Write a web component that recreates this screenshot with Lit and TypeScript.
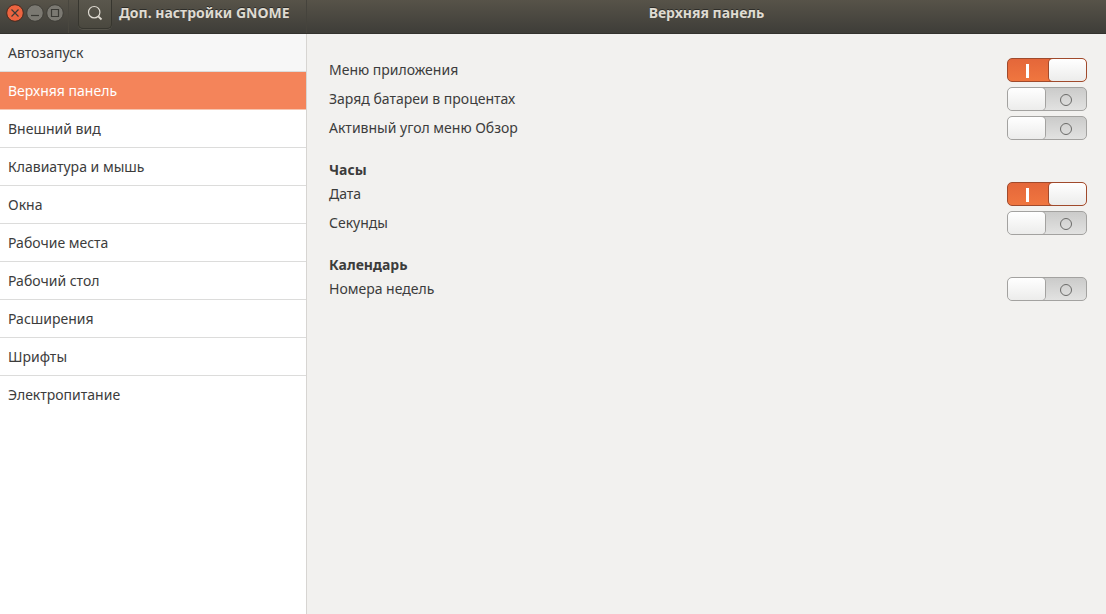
import { LitElement, html, css, svg } from "lit";
import { customElement, property, state } from "lit/decorators.js";

@customElement("toggle-row")
class ToggleRow extends LitElement {
  @property() label = "";
  @property({ type: Boolean }) on = false;

  static styles = css`
    :host { display: block; }
    .row {
      display: flex;
      align-items: center;
      justify-content: space-between;
      height: 24px;
    }
    .switch {
      appearance: none;
      box-sizing: border-box;
      display: grid;
      grid-template-columns: 37px 41px;
      width: 80px;
      height: 24px;
      margin: 0;
      border: 1px solid #a3a2a0;
      border-radius: 5px;
      background: linear-gradient(#cbcbca, #e2e2e1);
      overflow: hidden;
    }
    .switch::before {
      content: "";
      grid-row: 1;
      grid-column: 1;
      height: 22px;
      border-radius: 4px;
      background: linear-gradient(#ffffff, #ececeb);
      box-shadow: 0 0 0 1px #a3a2a0;
    }
    .switch::after {
      content: "";
      grid-row: 1;
      grid-column: 2;
      place-self: center;
      box-sizing: border-box;
      width: 12px;
      height: 12px;
      margin-top: 2px;
      border: 1px solid #6a6a68;
      border-radius: 50%;
    }
    .switch:checked {
      grid-template-columns: 41px 37px;
      border-color: #a04a2c;
      background: linear-gradient(#e4673a, #f0763f);
    }
    .switch:checked::before {
      grid-column: 2;
      box-shadow: 0 0 0 1px #a04a2c;
    }
    .switch:checked::after {
      grid-column: 1;
      width: 3px;
      height: 14px;
      margin: 2px 3px 0 0;
      border: 0;
      border-radius: 0;
      background: #ffffff;
    }
  `;

  render() {
    return html`<div class="row">
      <label for="switch">${this.label}</label>
      <input class="switch" id="switch" type="checkbox" role="switch" .checked=${this.on}
        @change=${(e: Event) => (this.on = (e.target as HTMLInputElement).checked)} />
    </div>`;
  }
}

const sections = [
  "Автозапуск", "Верхняя панель", "Внешний вид", "Клавиатура и мышь", "Окна",
  "Рабочие места", "Рабочий стол", "Расширения", "Шрифты", "Электропитание",
];

const groups = [
  { title: "", rows: [["Меню приложения", true], ["Заряд батареи в процентах", false], ["Активный угол меню Обзор", false]] },
  { title: "Часы", rows: [["Дата", true], ["Секунды", false]] },
  { title: "Календарь", rows: [["Номера недель", false]] },
] as { title: string; rows: [string, boolean][] }[];

const windowControls = [
  { name: "close", label: "Закрыть", glyph: svg`<path d="M5.5 5.5l7 7M12.5 5.5l-7 7" />` },
  { name: "min", label: "Свернуть", glyph: svg`<path d="M5 11.5h8" />` },
  { name: "max", label: "Развернуть", glyph: svg`<path d="M5.5 5.5h7v7h-7z" />` },
];

@customElement("app-root")
class AppRoot extends LitElement {
  @state() selected = "Верхняя панель";

  static styles = css`
    :host {
      display: flex;
      flex-direction: column;
      min-height: 100vh;
      font: 14px/20px "Noto Sans", "Open Sans", sans-serif;
      color: #3c3c3c;
      background: #f2f1ef;
    }
    .header {
      display: flex;
      box-sizing: border-box;
      height: 34px;
      color: #dfdbd2;
      background: linear-gradient(#575349, #3e3d38);
      border-bottom: 1px solid #33322e;
      text-shadow: 0 -1px #2e2d29;
    }
    .left {
      display: flex;
      box-sizing: border-box;
      flex: 0 0 307px;
      border-right: 1px solid #45433c;
    }
    .controls {
      display: flex;
      gap: 2px;
      box-sizing: border-box;
      width: 69px;
      padding: 4px 0 0 6px;
      border-right: 1px solid #49473f;
    }
    .control {
      width: 18px;
      height: 18px;
      padding: 0;
      border: 0;
      background: none;
    }
    .control svg, .search svg { display: block; }
    .disc { fill: #7b7972; stroke: #3f3e38; }
    .close .disc { fill: #ec6440; stroke: #48291d; }
    .glyph { fill: none; stroke: #3b3a35; stroke-width: 1.2; }
    .search {
      display: flex;
      align-items: flex-start;
      justify-content: center;
      box-sizing: border-box;
      width: 34px;
      height: 29px;
      margin-left: 9px;
      padding: 5px 0 0;
      border: 1px solid #37362f;
      border-top: 0;
      border-radius: 0 0 5px 5px;
      background: linear-gradient(#5a574d, #4a483f);
      box-shadow: 0 1px #55534a;
      color: #dfdbd2;
    }
    .title {
      margin: 0;
      padding-top: 3px;
      font-size: 14px;
      line-height: 20px;
      font-weight: 700;
    }
    .left .title { padding-left: 7px; }
    .right { flex: 1; }
    .right .title { text-align: center; }
    .body { display: flex; flex: 1; }
    .sidebar {
      box-sizing: border-box;
      flex: 0 0 307px;
      border-right: 1px solid #d7d5d2;
      background: #ffffff;
    }
    .list { margin: 0; padding: 0; list-style: none; }
    .link {
      display: block;
      padding: 9px 8px 8px;
      border-bottom: 1px solid #dcdcdb;
      color: inherit;
      text-decoration: none;
    }
    .item:first-child .link { background: #f7f7f7; }
    .item:last-child .link { border-bottom-color: transparent; }
    .item .link.active { color: #ffffff; background: #f4845a; border-bottom-color: #f6c5b0; }
    .content {
      flex: 1;
      padding: 24px 19px 24px 22px;
    }
    .group { display: flex; flex-direction: column; gap: 5px; }
    .group + .group { margin-top: 20px; }
    .heading {
      margin: 0 0 -3px;
      font-size: 14px;
      line-height: 20px;
      font-weight: 700;
    }
  `;

  render() {
    return html`
      <header class="header">
        <div class="left">
          <div class="controls">
            ${windowControls.map((c) => html`<button class="control ${c.name}" aria-label=${c.label}>
              <svg width="18" height="18" viewBox="0 0 18 18">
                <circle class="disc" cx="9" cy="9" r="8.3" />
                <g class="glyph">${c.glyph}</g>
              </svg>
            </button>`)}
          </div>
          <button class="search" aria-label="Поиск">
            <svg width="16" height="16" viewBox="0 0 16 16" fill="none" stroke="currentColor">
              <circle cx="7.2" cy="7.2" r="5.7" stroke-width="1.2" />
              <path d="M11.3 11.3l3.2 3.2" stroke-width="1.8" />
            </svg>
          </button>
          <h1 class="title">Доп. настройки GNOME</h1>
        </div>
        <div class="right"><h2 class="title">${this.selected}</h2></div>
      </header>
      <div class="body">
        <nav class="sidebar">
          <ul class="list">
            ${sections.map((s) => html`<li class="item">
              <a class="link ${s === this.selected ? "active" : ""}" href="#"
                @click=${(e: Event) => { e.preventDefault(); this.selected = s; }}>${s}</a>
            </li>`)}
          </ul>
        </nav>
        <main class="content">
          ${groups.map((g) => html`<section class="group">
            ${g.title ? html`<h3 class="heading">${g.title}</h3>` : ""}
            ${g.rows.map(([label, on]) => html`<toggle-row .label=${label} .on=${on}></toggle-row>`)}
          </section>`)}
        </main>
      </div>
    `;
  }
}
